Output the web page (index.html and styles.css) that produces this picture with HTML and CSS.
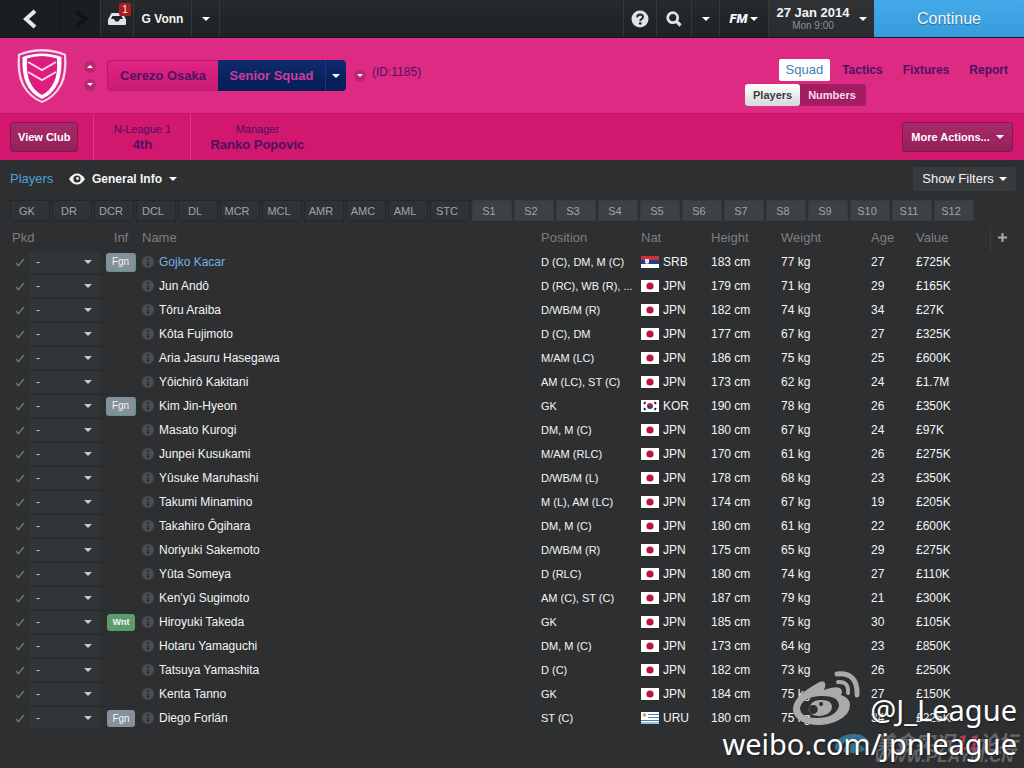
FILE: index.html
```html
<!DOCTYPE html>
<html lang="en">
<head>
<meta charset="utf-8">
<title>Cerezo Osaka - Senior Squad</title>
<link rel="stylesheet" href="styles.css">
</head>
<body>
<header class="topbar">
  <button class="cell back" aria-label="Back"><svg width="14" height="20" viewBox="0 0 14 20"><path d="M12 2 3 10l9 8" fill="none" stroke="#e6e9ea" stroke-width="4"/></svg></button>
  <button class="cell forward" aria-label="Forward"><svg width="14" height="20" viewBox="0 0 14 20"><path d="m2 2 9 8-9 8" fill="none" stroke="#111315" stroke-width="4"/></svg></button>
  <button class="cell inbox" aria-label="Inbox">
    <svg width="18" height="12" viewBox="0 0 18 12"><path d="M3.500 0h11L18 6.500V11q0 1-1 1H1q-1 0-1-1V6.500z" fill="#dfe3e6"/><path d="M4.500 3h9l1.500 3h-3l-1.500 2.500h-3L6 6H3z" fill="#202326"/></svg>
    <span class="badge">1</span>
  </button>
  <button class="cell manager">G Vonn</button>
  <button class="cell drop" aria-label="Manager menu"><span class="caret"></span></button>
  <div class="spacer"></div>
  <button class="cell help" aria-label="Help"><svg width="18" height="18" viewBox="0 0 18 18"><circle cx="9" cy="9" r="8.500" fill="#dfe3e6"/><path d="M6.200 7.200C6.200 3.600 12 3.700 12 7c0 2-2.800 2-2.800 4" fill="none" stroke="#222528" stroke-width="2"/><circle cx="9.200" cy="13.400" r="1.300" fill="#222528"/></svg></button>
  <button class="cell search" aria-label="Search"><svg width="16" height="16" viewBox="0 0 16 16"><circle cx="6.700" cy="6.700" r="5" fill="none" stroke="#dfe3e6" stroke-width="2.800"/><path d="m10.200 10.200 4.300 4.300" stroke="#dfe3e6" stroke-width="3.200"/></svg></button>
  <button class="cell drop" aria-label="Search menu"><span class="caret"></span></button>
  <button class="cell fm"><span class="fm-logo">FM</span><span class="caret"></span></button>
  <button class="cell date"><span class="date-text"><b>27 Jan 2014</b><small>Mon 9:00</small></span><span class="caret"></span></button>
  <button class="continue">Continue</button>
</header>

<section class="club">
  <svg class="crest" width="52" height="58" viewBox="0 0 52 56"><path d="M26 1Q38 1 50 6q2 19-4 31-7 13-20 18Q13 50 6 37 0 25 2 6 14 1 26 1z" fill="#f7d5ea"/><path d="M26 3.500q11 0 22 4 1 18-4 28.500Q38 48 26 53 14 48 8 36 3 25.500 4 7.500q11-4 22-4z" fill="#d82c84"/><path d="M26 5.500q10 0 19.500 3.500Q46 26 42 35 37 46 26 51 15 46 10 35 6 26 6.500 9 16 5.500 26 5.500z" fill="#fff"/><path d="M26 8q8 0 15 2.500Q42 26 38 34q-4 9-12 13-8-4-12-13-4-8-3-23.500Q18 8 26 8z" fill="#dc1f7e"/><path d="M12 14l14 8 14-8M12 24l14 8 14-8" fill="none" stroke="#fbd3e7" stroke-width="2"/></svg>
  <div class="steps">
    <button class="round" aria-label="Previous club"><span class="caret small up"></span></button>
    <button class="round" aria-label="Next club"><span class="caret small"></span></button>
  </div>
  <div class="title-tabs">
    <button class="team">Cerezo Osaka</button>
    <button class="squad">Senior Squad</button>
    <button class="squad-drop" aria-label="Choose squad"><span class="caret"></span></button>
  </div>
  <button class="round" aria-label="More about the club"><span class="caret small"></span></button>
  <span class="club-id">(ID:1185)</span>
  <div class="spacer"></div>
  <nav class="menus">
    <div class="menu">
      <a class="current" href="#squad">Squad</a><a href="#tactics">Tactics</a><a href="#fixtures">Fixtures</a><a href="#report">Report</a>
    </div>
    <div class="submenu"><a class="current" href="#players">Players</a><a href="#numbers">Numbers</a></div>
  </nav>
</section>

<section class="info">
  <button class="pink-button">View Club</button>
  <div class="fact league"><span>N-League 1</span><b>4th</b></div>
  <div class="fact boss"><span>Manager</span><b>Ranko Popovic</b></div>
  <div class="spacer"></div>
  <button class="pink-button actions">More Actions...<span class="caret"></span></button>
</section>

<main class="main">
  <div class="toolbar">
    <a class="players" href="#players">Players</a>
    <button class="view"><svg width="16" height="12" viewBox="0 0 16 12"><path d="M0 6q3.500-5.500 8-5.500T16 6q-3.500 5.500-8 5.500T0 6z" fill="#f2f4f4"/><circle cx="8" cy="6" r="3.600" fill="#2b2e30"/><circle cx="8.500" cy="5.500" r="1.400" fill="#f2f4f4"/></svg><span>General Info</span><span class="caret"></span></button>
    <div class="spacer"></div>
    <button class="filters">Show Filters<span class="caret"></span></button>
  </div>
  <div class="slots" id="slots"></div>
  <table class="table">
    <colgroup><col class="c-check"><col class="c-pick"><col class="c-inf"><col><col class="c-pos"><col class="c-nat"><col class="c-height"><col class="c-weight"><col class="c-age"><col class="c-value"><col class="c-add"></colgroup>
    <thead><tr><th colspan="2" class="pkd">Pkd</th><th class="inf">Inf</th><th class="player">Name</th><th>Position</th><th>Nat</th><th>Height</th><th>Weight</th><th>Age</th><th>Value</th><th class="add"><button aria-label="Add column"><svg width="9" height="9" viewBox="0 0 9 9"><path d="M4.500 0v9M0 4.500h9" stroke="#a9adaf" stroke-width="2"/></svg></button></th></tr></thead>
    <tbody id="rows"></tbody>
  </table>
</main>

<div class="forum-mark">
  <svg width="38" height="22" viewBox="0 0 38 22"><path d="M1 14Q3 2 18 1t19 12Q30 5 19 7 8 7 5 18 1 18 1 14zM9 19q1-8 10-9 9 0 12 7-7 5-22 2z" fill="#35718f"/></svg>
  <div><span class="forum-name">美金实况<i>11</i>论坛</span><span class="forum-url">WWW.PLAYM.CN</span></div>
</div>
<div class="weibo-mark">
  <div class="handle">
    <svg width="68" height="56" viewBox="0 0 68 56"><path fill-rule="evenodd" d="M24 13q7-5 9-1 1 2-1 7 14-5 17-1 2 2 0 6 9 3 9 10 0 10-13 16-13 6-28 3Q1 49 1 38 1 26 24 13zM28 25Q10 26 8 37q0 9 16 10 20 0 23-12 0-11-19-10z" fill="#a9aaab"/><path fill-rule="evenodd" d="M27 29q12-1 13 6 0 9-13 10-10 0-10-7 1-8 10-9zM22 34a4.500 4.500 0 1 0 3 7 4.500 4.500 0 0 0-3-7zM29 31a2 2 0 1 0 .1 0z" fill="#a9aaab"/><path d="M46 11q11-1 10 11" fill="none" stroke="#a9aaab" stroke-width="4" stroke-linecap="round"/><path d="M45 3q21-2 20 21" fill="none" stroke="#a9aaab" stroke-width="5" stroke-linecap="round"/></svg>
    <span>@J_League</span>
  </div>
  <div>weibo.com/jpnleague</div>
</div>
<script src="squad.js"></script>
</body>
</html>
```
FILE: styles.css
```css
* { box-sizing: border-box; }
body {
  margin: 0;
  min-height: 100vh;
  display: flex;
  flex-direction: column;
  position: relative;
  background: #2d2f31;
  color: #f4f5f5;
  font: 12px/16px "Liberation Sans", Arial, sans-serif;
}
button, select { font: inherit; color: inherit; border: 0; padding: 0; margin: 0; background: none; }
a { color: inherit; text-decoration: none; }
svg { display: block; flex: none; }
.spacer { flex: 1; }
.caret {
  flex: none;
  border: 4px solid transparent;
  border-top-color: #fff;
  border-bottom-width: 0;
}
.caret.small { border-width: 3px 3px 0; }
.caret.up { transform: rotate(180deg); }

.topbar {
  height: 38px;
  display: flex;
  background: linear-gradient(#272a2d, #1f2225);
  border-bottom: 1px solid #141618;
}
.cell {
  display: flex;
  align-items: center;
  justify-content: center;
  border-right: 1px solid #33363a;
}
.back { width: 61px; background: #1b1e20; border-right-color: #141618; }
.forward { width: 40px; background: #1b1e20; }
.inbox { width: 33px; position: relative; }
.badge {
  position: absolute;
  top: 3px;
  right: 2px;
  width: 12px;
  height: 13px;
  background: #a81e1e;
  border-radius: 2px;
  font-size: 10px;
  line-height: 13px;
  text-align: center;
}
.manager { width: 58px; font-weight: bold; }
.drop { width: 28px; }
.help { width: 34px; border-left: 1px solid #33363a; }
.search { width: 35px; }
.fm { width: 49px; gap: 3px; }
.fm-logo { font: italic 900 13px/16px Roboto, sans-serif; }
.date { width: 105px; gap: 9px; background: linear-gradient(#303336, #292c2e); border: 0; }
.date-text { display: flex; flex-direction: column; line-height: 13px; }
.date-text b { font-size: 13px; }
.date-text small { font-size: 10px; color: #8b8e90; }
.continue {
  width: 150px;
  background: linear-gradient(#43a9e8, #379cdb);
  font-size: 16px;
  text-shadow: 0 1px 1px #1f6696;
}

.club {
  min-height: 75px;
  display: flex;
  align-items: center;
  padding: 0 8px 0 16px;
  background: #dd2b83;
  color: #4d1263;
}
.crest { margin-right: 16px; }
.steps { display: flex; flex-direction: column; gap: 6px; margin-right: 11px; }
.round {
  width: 12px;
  height: 12px;
  border-radius: 6px;
  background: #b9286f;
  display: flex;
  align-items: center;
  justify-content: center;
}
.title-tabs { display: flex; height: 31px; margin-right: 8px; font-size: 13px; font-weight: bold; }
.team {
  width: 111px;
  border: 1px solid #b21c69;
  border-right: 0;
  border-radius: 4px 0 0 4px;
  background: linear-gradient(#e02484, #cb1b72);
}
.squad { width: 108px; background: linear-gradient(#0f2b6b, #051d57); color: #cf3b9b; border-right: 1px solid #1f3774; }
.squad-drop {
  width: 20px;
  display: flex;
  align-items: center;
  justify-content: center;
  background: linear-gradient(#0f2b6b, #051d57);
  border-radius: 0 4px 4px 0;
}
.club-id { margin: 0 0 8px 6px; }
.menus { align-self: stretch; width: 271px; padding-top: 21px; font-weight: bold; }
.menu { display: flex; justify-content: flex-end; gap: 4px; }
.menu a { height: 22px; line-height: 22px; padding: 0 8px; border-radius: 2px; }
.menu .current { padding: 0 7px; background: #fff; color: #3b80b5; font-weight: normal; font-size: 13px; }
.submenu { width: 121px; display: flex; margin-top: 3px; background: #a21d62; border-radius: 3px; font-size: 11px; color: #f7dceb; }
.submenu a { line-height: 22px; padding: 0 8px; }
.submenu .current { background: linear-gradient(#fff, #d5d8dc); color: #3a3d40; border-radius: 3px; }

.info {
  min-height: 47px;
  display: flex;
  align-items: center;
  padding: 0 11px 0 10px;
  background: #d2176f;
  border-top: 1px solid #c01767;
  color: #4b1160;
}
.pink-button {
  height: 30px;
  padding: 0 7px;
  border: 1px solid #85174f;
  border-radius: 3px;
  background: linear-gradient(#a82a69, #952159);
  color: #fff;
  font-size: 11px;
  font-weight: bold;
}
.actions { width: 111px; padding: 0; display: flex; align-items: center; justify-content: center; gap: 6px; }
.fact {
  align-self: stretch;
  display: flex;
  flex-direction: column;
  justify-content: center;
  text-align: center;
  line-height: 15px;
  font-size: 11px;
  border-left: 1px solid #e0388a;
}
.fact b { font-size: 13px; }
.league { width: 97px; margin-left: 15px; }
.boss { padding-left: 19px; }

.main { flex: 1; padding: 0 10px; }
.toolbar { display: flex; align-items: center; height: 38px; }
.players { color: #4ea3d3; font-size: 13px; width: 49px; margin-right: 10px; }
.view { display: flex; align-items: center; gap: 7px; font-weight: bold; }
.filters {
  display: flex;
  align-items: center;
  justify-content: center;
  gap: 5px;
  height: 24px;
  width: 103px;
  margin-right: -2px;
  background: #383b3e;
  border-radius: 3px;
  font-size: 13px;
}
.filters, .view { color: #f4f5f5; }
.slots { display: flex; gap: 2px; padding-top: 2px; }
.slots button {
  width: 40px;
  height: 21px;
  padding-right: 6px;
  border: 1px solid #25282a;
  background: #303335;
  color: #a2a5a7;
  font-size: 11px;
}
.slots .sub { background: #3c4144; border-color: #373b3e; }

.table { width: 100%; table-layout: fixed; border-collapse: collapse; margin-top: 5px; }
.c-check { width: 19px; }
.c-pick { width: 72px; }
.c-inf { width: 40px; }
.c-pos { width: 100px; }
.c-nat, .c-height { width: 70px; }
.c-weight { width: 90px; }
.c-age { width: 45px; }
.c-value { width: 74px; }
.c-add { width: 24px; }
.table th { height: 24px; padding: 0; text-align: left; font-weight: normal; font-size: 13px; color: #7c7f81; }
.table .pkd { padding-left: 2px; }
.table .player { padding-left: 1px; }
.table th.inf { text-align: center; }
.table th.add { border-left: 1px solid #3b3e41; }
.add button { display: block; margin: 0 auto; }
.table td { height: 24px; padding: 0; white-space: nowrap; overflow: hidden; text-overflow: ellipsis; }
.table td.position { font-size: 11px; }
.table tbody tr { border-top: 1px solid #2a2c2e; }
.table td.check svg { margin: 0 auto; }
.pick { display: flex; align-items: center; width: 71px; height: 22px; background: #313538; }
.pick select { appearance: none; flex: 1; padding: 0 7px; border-radius: 0; width: 100%; color: #c9cccd; }
.pick .caret { border-top-color: #c9cccd; margin-right: 8px; }
.tag {
  display: block;
  width: 28px;
  height: 17px;
  margin: 0 auto;
  border-radius: 3px;
  background: #84909c;
  font-size: 10px;
  line-height: 17px;
  text-align: center;
}
.tag.green { background: #5c9c6c; font-size: 9px; font-weight: bold; }
.tag.edge { border-right: 1px solid #5c9c6c; border-bottom: 1px solid #5c9c6c; width: 30px; height: 19px; line-height: 18px; }
.name, .nation { display: flex; align-items: center; }
.name { gap: 5px; padding-left: 1px; }
.name.linked { color: #71b0e8; }
.nation { gap: 4px; }

.forum-mark {
  position: absolute;
  right: 6px;
  bottom: 5px;
  display: flex;
  align-items: flex-start;
  gap: 2px;
  color: #65676a;
  font-family: "Noto Sans CJK SC", sans-serif;
  font-weight: bold;
  font-style: italic;
}
.forum-mark span { display: block; }
.forum-name { font-size: 20px; line-height: 18px; }
.forum-name i { color: #a8405f; }
.forum-url { font-size: 17px; line-height: 12px; font-family: "Liberation Sans", sans-serif; }
.weibo-mark {
  position: absolute;
  right: 7px;
  bottom: 7px;
  text-align: right;
  color: #fff;
  font: 29px/34px "Noto Sans", sans-serif;
  text-shadow: 1px 1px 2px #1a1c1e;
}
.handle { display: flex; justify-content: flex-end; align-items: flex-end; gap: 10px; }
```
FILE: squad.js
```js
const slots = "GK DR DCR DCL DL MCR MCL AMR AMC AML STC S1 S2 S3 S4 S5 S6 S7 S8 S9 S10 S11 S12".split(" ");
document.getElementById("slots").innerHTML = slots
  .map(s => `<button${/^S\d/.test(s) ? ' class="sub"' : ""}>${s}</button>`).join("");

const players = [
  ["Gojko Kacar", "D (C), DM, M (C)", "SRB", 183, 77, 27, "£725K", "Fgn"],
  ["Jun Andô", "D (RC), WB (R), ...", "JPN", 179, 71, 29, "£165K"],
  ["Tôru Araiba", "D/WB/M (R)", "JPN", 182, 74, 34, "£27K"],
  ["Kôta Fujimoto", "D (C), DM", "JPN", 177, 67, 27, "£325K"],
  ["Aria Jasuru Hasegawa", "M/AM (LC)", "JPN", 186, 75, 25, "£600K"],
  ["Yôichirô Kakitani", "AM (LC), ST (C)", "JPN", 173, 62, 24, "£1.7M"],
  ["Kim Jin-Hyeon", "GK", "KOR", 190, 78, 26, "£350K", "Fgn"],
  ["Masato Kurogi", "DM, M (C)", "JPN", 180, 67, 24, "£97K"],
  ["Junpei Kusukami", "M/AM (RLC)", "JPN", 170, 61, 26, "£275K"],
  ["Yûsuke Maruhashi", "D/WB/M (L)", "JPN", 178, 68, 23, "£350K"],
  ["Takumi Minamino", "M (L), AM (LC)", "JPN", 174, 67, 19, "£205K"],
  ["Takahiro Ôgihara", "DM, M (C)", "JPN", 180, 61, 22, "£600K"],
  ["Noriyuki Sakemoto", "D/WB/M (R)", "JPN", 175, 65, 29, "£275K"],
  ["Yûta Someya", "D (RLC)", "JPN", 180, 74, 27, "£110K"],
  ["Ken'yû Sugimoto", "AM (C), ST (C)", "JPN", 187, 79, 21, "£300K"],
  ["Hiroyuki Takeda", "GK", "JPN", 185, 75, 30, "£105K", "Wnt"],
  ["Hotaru Yamaguchi", "DM, M (C)", "JPN", 173, 64, 23, "£850K"],
  ["Tatsuya Yamashita", "D (C)", "JPN", 182, 73, 26, "£250K"],
  ["Kenta Tanno", "GK", "JPN", 184, 75, 27, "£150K"],
  ["Diego Forlán", "ST (C)", "URU", 180, 75, 34, "£225K", "Fgn"]
];

const flags = {
  JPN: '<circle cx="9" cy="6" r="3.600" fill="#c01035"/>',
  SRB: '<path d="M0 0h18v4H0z" fill="#c8313e"/><path d="M0 4h18v4H0z" fill="#253f91"/><path d="M4 3h4v4l-2 1-2-1z" fill="#f3dfe0"/>',
  KOR: '<path d="M6 6a3 3 0 0 1 6 0z" fill="#c8203c"/><path d="M6 6a3 3 0 0 0 6 0z" fill="#243c84"/><path d="m3 4 1.500-2M13.500 2 15 4M3 8l1.500 2M13.500 10 15 8" stroke="#222" stroke-width="1.800"/>',
  URU: '<path d="M0 2.500h18M0 5.500h18M0 8.500h18M0 11h18" stroke="#3f7fc0" stroke-width="1.200"/><path d="M0 0h7v6H0z" fill="#fff"/><circle cx="3.500" cy="3" r="1.800" fill="#c9a94e"/>'
};
const flag = n => `<svg width="18" height="12" viewBox="0 0 18 12"><path d="M0 0h18v12H0z" fill="#fff"/>${flags[n]}</svg>`;
const check = '<svg width="10" height="9" viewBox="0 0 10 9"><path d="m1 5 2.500 2.500L9 1" fill="none" stroke="#6d7072" stroke-width="1.600"/></svg>';
const info = '<svg width="12" height="12" viewBox="0 0 12 12"><circle cx="6" cy="6" r="6" fill="#4b4e50"/><path d="M6 2v2M6 5v5" stroke="#2d2f31" stroke-width="2"/></svg>';

document.getElementById("rows").innerHTML = players.map(([name, pos, nat, cm, kg, age, value, tag], i) => {
  const kind = tag === "Wnt" ? " green" : tag && i < 19 ? " edge" : "";
  return `<tr>
    <td class="check">${check}</td>
    <td><label class="pick"><select aria-label="Position picked for ${name}"><option>-</option></select><span class="caret"></span></label></td>
    <td>${tag ? `<span class="tag${kind}">${tag}</span>` : ""}</td>
    <td><div class="name${i ? "" : " linked"}">${info}<span>${name}</span></div></td>
    <td class="position">${pos}</td>
    <td><div class="nation">${flag(nat)}${nat}</div></td>
    <td>${cm} cm</td><td>${kg} kg</td><td>${age}</td><td colspan="2">${value}</td>
  </tr>`;
}).join("");
```
